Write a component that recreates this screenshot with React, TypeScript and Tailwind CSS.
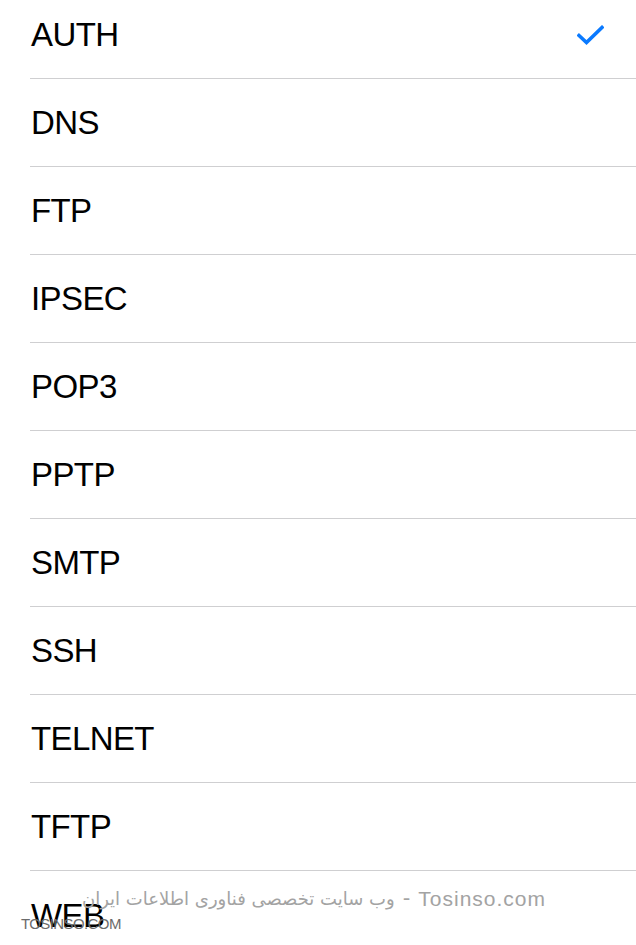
import React from "react";

const items = ["AUTH", "DNS", "FTP", "IPSEC", "POP3", "PPTP", "SMTP", "SSH", "TELNET", "TFTP", "WEB"];

const Check: React.FC = () => (
  <svg width="27" height="20" viewBox="0 0 27 20" fill="none">
    <path d="M2 10.5 L9.5 17.5 L25 2.5" stroke="#0a7aff" strokeWidth="3.6" strokeLinecap="square" />
  </svg>
);

const App: React.FC = () => {
  const selected = "AUTH";

  return (
    <div
      className="relative w-[636px] h-[945px] overflow-hidden bg-white"
      style={{ fontFamily: '"Liberation Sans", Arial, sans-serif' }}
    >
      <ul className="-mt-[9px] pl-[30px]">
        {items.map((item, i) => (
          <li
            key={item}
            className={
              "h-[88px] flex items-center justify-between pr-[32px] " +
              (i < items.length - 1 ? "border-b border-[#cfcfd1]" : "")
            }
          >
            <span className="pl-[1px] text-[33px] leading-none tracking-[-0.6px] text-black">{item}</span>
            {item === selected && <Check />}
          </li>
        ))}
      </ul>

      {/* watermark */}
      <div className="absolute left-[190px] right-0 top-[880px] bottom-0 bg-white/10" />
      <div
        className="absolute right-[90px] top-[883px] flex items-center gap-[8px] text-[21px] text-[#a3a3a3] whitespace-nowrap"
        style={{ fontFamily: '"DejaVu Sans", "Liberation Sans", sans-serif' }}
      >
        <span dir="rtl" className="text-[18px]">وب سایت تخصصی فناوری اطلاعات ایران</span>
        <span>-</span>
        <span className="tracking-[1px]" style={{ fontFamily: '"Liberation Sans", sans-serif' }}>
          Tosinso.com
        </span>
      </div>
      <div className="absolute left-[21px] top-[916px] text-[15px] leading-none tracking-[-0.6px] text-[#6b6b6b]">
        TOSINSO.COM
      </div>
    </div>
  );
};

export default App;
